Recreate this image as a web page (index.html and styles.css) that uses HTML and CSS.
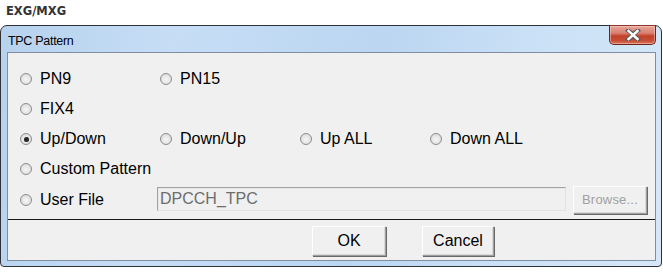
FILE: index.html
```html
<!DOCTYPE html>
<html lang="en">
<head>
  <meta charset="UTF-8">
  <title>TPC Pattern</title>
  <link rel="stylesheet" href="styles.css">
</head>
<body>
  <div class="app-label">EXG/MXG</div>

  <div class="window">
    <div class="title-bar">
      <span class="title">TPC Pattern</span>
      <button class="close-btn" aria-label="Close">
        <svg width="16" height="12" viewBox="0 0 16 12">
          <path d="M3 1.5 L8 5 L13 1.5 M3 10.5 L8 7 L13 10.5 M3 1.5 L13 10.5 M13 1.5 L3 10.5" fill="none" stroke="#5b5b5b" stroke-width="4" stroke-linecap="square"/>
          <path d="M3.5 2 L12.5 10 M12.5 2 L3.5 10" fill="none" stroke="#ffffff" stroke-width="2.4" stroke-linecap="square"/>
        </svg>
      </button>
    </div>

    <div class="client">
      <div class="options">
        <div class="row">
          <label class="opt w140"><span class="radio"></span>PN9</label>
          <label class="opt w140"><span class="radio"></span>PN15</label>
        </div>
        <div class="row">
          <label class="opt w140"><span class="radio"></span>FIX4</label>
        </div>
        <div class="row">
          <label class="opt w140"><span class="radio checked"></span>Up/Down</label>
          <label class="opt w140"><span class="radio"></span>Down/Up</label>
          <label class="opt w130"><span class="radio"></span>Up ALL</label>
          <label class="opt"><span class="radio"></span>Down ALL</label>
        </div>
        <div class="row">
          <label class="opt"><span class="radio"></span>Custom Pattern</label>
        </div>
        <div class="row row-file">
          <label class="opt w137"><span class="radio"></span>User File</label>
          <div class="file-input">DPCCH_TPC</div>
          <button class="btn btn-browse" disabled>Browse...</button>
        </div>
      </div>

      <div class="actions">
        <button class="btn btn-ok">OK</button>
        <button class="btn btn-cancel">Cancel</button>
      </div>
    </div>
  </div>
</body>
</html>
```

FILE: styles.css
```css
body {
  margin: 0;
  background-color: #ffffff;
  font-family: 'Liberation Sans', Arial, sans-serif;
  color: #000000;
  width: 663px;
  height: 272px;
  overflow: hidden;
}
.app-label {
  font-family: 'DejaVu Sans', sans-serif;
  font-weight: bold;
  font-size: 11.5px;
  line-height: 13px;
  color: #333333;
  padding: 5px 6px 7px;
  height: 13px;
}
.window {
  width: 660px;
  height: 240px;
  border: 1px solid #2f3236;
  border-radius: 7px 7px 4px 4px;
  background: linear-gradient(100deg, #b7d2ee 0%, #c6ddf5 25%, #bcd6f1 55%, #c9e0f6 75%, #d6e7f8 100%);
  display: flex;
  flex-direction: column;
}
.title-bar {
  height: 26px;
  display: flex;
  align-items: flex-start;
  padding: 0 5px 0 7px;
}
.title {
  font-size: 12.5px;
  letter-spacing: -0.3px;
  line-height: 14px;
  margin-top: 8px;
  color: #000000;
}
.close-btn {
  margin-left: auto;
  margin-top: -1px;
  width: 47px;
  height: 20px;
  padding: 0;
  border: 1px solid #6b2519;
  border-top-color: #8a3a2c;
  border-radius: 0 0 5px 5px;
  background: linear-gradient(#e9a79b 0%, #d7806f 40%, #c0432c 55%, #c64c33 80%, #d9735c 100%);
  box-shadow: inset 0 0 0 1px rgba(255, 210, 200, 0.5);
  display: flex;
  align-items: center;
  justify-content: center;
}
.client {
  margin: 0 5px 0 6px;
  height: 207px;
  border: 1px solid #7f8ea0;
  background-color: #f0f0f0;
  display: flex;
  flex-direction: column;
}
.options {
  padding: 11px 0 0 12px;
  border-bottom: 1px solid #1a1a1a;
  height: 155px;
}
.row {
  display: flex;
  align-items: center;
  height: 30px;
}
.row-file {
  height: 31px;
}
.opt {
  display: flex;
  align-items: center;
  font-size: 16px;
  line-height: 18px;
  white-space: nowrap;
}
.w140 { width: 140px; }
.w130 { width: 130px; }
.w137 { width: 137px; }
.radio {
  width: 12px;
  height: 12px;
  border: 1px solid #8e8e8e;
  border-radius: 50%;
  background: radial-gradient(circle at 50% 55%, #f6f6f6 0%, #e6e6e6 50%, #cfcfcf 100%);
  margin-right: 8px;
  box-sizing: border-box;
  display: flex;
  align-items: center;
  justify-content: center;
  flex-shrink: 0;
}
.radio.checked::after {
  content: '';
  width: 5px;
  height: 5px;
  border-radius: 50%;
  background: radial-gradient(circle, #2a2a2a 40%, #000000 100%);
}
.file-input {
  width: 405px;
  height: 22px;
  border: 1px solid #e2e2e2;
  border-top-color: #a0a0a0;
  border-left-color: #a0a0a0;
  box-shadow: inset 1px 1px 0 #e8e8e8;
  padding-left: 2px;
  font-size: 16px;
  line-height: 22px;
  color: #6d6d6d;
  margin-top: -2px;
}
.btn {
  font-family: 'Liberation Sans', Arial, sans-serif;
  background-color: #f0f0f0;
  border: 1px solid #a0a0a0;
  border-top-color: #ffffff;
  border-left-color: #ffffff;
  box-shadow: inset -1px -1px 0 #d8d8d8, 1px 1px 0 #696969;
  padding: 0;
  color: #000000;
}
.btn-browse {
  margin-left: 7px;
  width: 74px;
  height: 28px;
  font-size: 13px;
  color: #a0a0a0;
  letter-spacing: 0.2px;
}
.actions {
  display: flex;
  gap: 36px;
  padding: 6px 0 0 304px;
}
.btn-ok,
.btn-cancel {
  height: 30px;
  font-size: 16px;
}
.btn-ok { width: 74px; }
.btn-cancel { width: 72px; }
```
